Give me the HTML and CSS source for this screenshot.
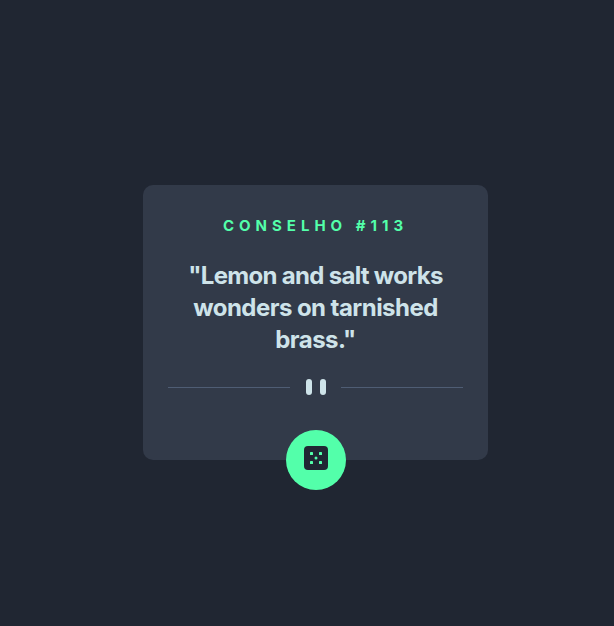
FILE: index.html
```html
<!DOCTYPE html>
<html lang="pt-BR">
<head>
<meta charset="utf-8">
<title>Conselho</title>
<link rel="stylesheet" href="styles.css">
</head>
<body>
<main class="card">
  <h1 class="title">CONSELHO #113</h1>
  <p class="advice"><span class="line first">"Lemon and salt works</span> <span class="line second">wonders on tarnished</span> <span class="line third">brass."</span></p>
  <svg class="divider" width="295" height="16" viewBox="0 0 295 16" aria-hidden="true">
    <path fill="#4f5d74" d="M0 8h122v1H0zM173 8h122v1H173z"/>
    <rect x="138" width="6" height="16" rx="3" fill="#cee3e9"/>
    <rect x="152" width="6" height="16" rx="3" fill="#cee3e9"/>
  </svg>
  <button class="dice" type="button" aria-label="Novo conselho">
    <svg width="24" height="24" viewBox="0 0 24 24">
      <rect width="24" height="24" rx="4" fill="#202733"/>
      <g fill="#53ffaa">
        <rect x="6" y="6" width="3" height="3" rx=".6"/>
        <rect x="15" y="6" width="3" height="3" rx=".6"/>
        <circle cx="12" cy="12" r="1.5"/>
        <rect x="6" y="15" width="3" height="3" rx=".6"/>
        <rect x="15" y="15" width="3" height="3" rx=".6"/>
      </g>
    </svg>
  </button>
</main>
</body>
</html>
```
FILE: styles.css
```css
* { box-sizing: border-box; }
body {
  margin: 0;
  height: 626px;
  padding: 185px 0 0 143px;
  overflow: hidden;
  background: #202632;
  font-family: Inter, "Liberation Sans", sans-serif;
}
.card {
  display: flex;
  flex-direction: column;
  align-items: center;
  width: 345px;
  height: 275px;
  padding-top: 30px;
  border-radius: 10px;
  background: #323a49;
}
.title {
  margin: 0;
  font-size: 15px;
  line-height: 22px;
  font-weight: 700;
  letter-spacing: 5px;
  color: #53ffaa;
  white-space: nowrap;
}
.advice {
  margin: 23px 0 0;
  text-align: center;
  font-size: 24px;
  line-height: 32px;
  font-weight: 700;
  color: #cee3e9;
}
.line { display: block; white-space: nowrap; }
.first { letter-spacing: -0.7px; }
.second { letter-spacing: -0.55px; }
.third { letter-spacing: -0.55px; }
.divider { flex: none; margin-top: 23px; }
.dice {
  flex: none;
  display: flex;
  justify-content: center;
  width: 60px;
  height: 60px;
  margin-top: 35px;
  padding: 16px 0 0;
  align-items: flex-start;
  border: 0;
  border-radius: 50%;
  background: #53ffaa;
}
```
